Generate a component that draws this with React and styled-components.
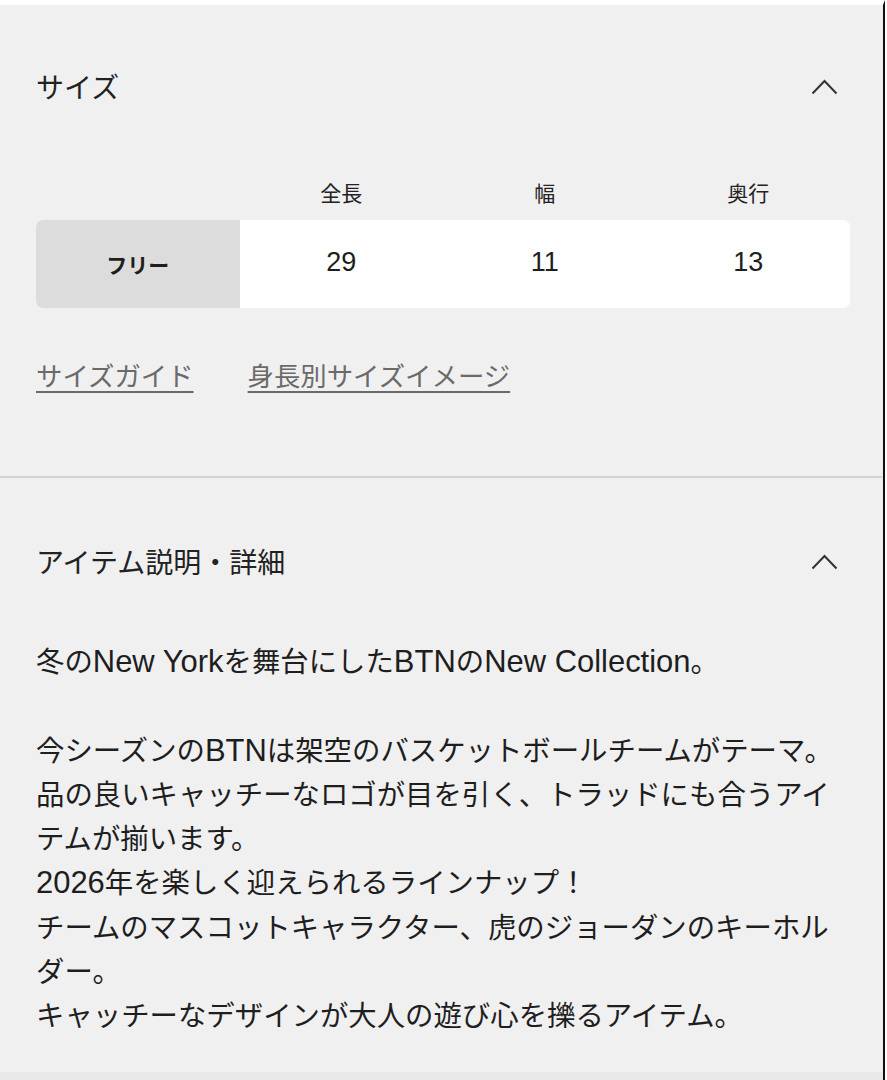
import React from "react"
import styled, { createGlobalStyle } from "styled-components"

const GlobalStyle = createGlobalStyle`
  html, body {
    margin: 0;
    padding: 0;
    background: #fff;
  }
  body {
    font-family: "Liberation Sans", "Noto Sans CJK JP", sans-serif;
    color: #222;
  }
`

const Page = styled.div`
  width: 885px;
  min-height: 1080px;
  box-sizing: border-box;
  border-top: 5px solid #fff;
  border-right: 2px solid #111;
  background: #e9e9e9;
`

const Panel = styled.div`
  width: 882px;
  min-height: 1067px;
  background: #f0f0f0;
  display: flex;
  flex-direction: column;
`

const Section = styled.section`
  padding: ${(p) => p.$top}px 32px ${(p) => p.$bottom}px 36px;
  border-bottom: ${(p) => (p.$divider ? "2px solid #d2d2d2" : "none")};
  display: flex;
  flex-direction: column;
`

const HeaderRow = styled.div`
  display: flex;
  align-items: center;
  justify-content: space-between;
  height: 40px;
`

const Title = styled.h2`
  margin: 0;
  font-size: 28px;
  font-weight: 400;
  color: #222;
`

const ChevronButton = styled.button`
  border: 0;
  background: none;
  padding: 0;
  margin-right: 12px;
  display: flex;
  cursor: pointer;
`

const SizeTable = styled.div`
  margin-top: 71px;
  display: flex;
  flex-direction: column;
  gap: 13px;
`

const HeadRow = styled.div`
  display: grid;
  grid-template-columns: repeat(4, 1fr);
  height: 30px;
  align-items: center;
`

const HeadCell = styled.div`
  text-align: center;
  font-size: 21px;
  color: #222;
`

const DataRow = styled.div`
  display: grid;
  grid-template-columns: repeat(4, 1fr);
  height: 88px;
  background: #fff;
  border-radius: 7px;
  overflow: hidden;
`

const DataCell = styled.div`
  display: flex;
  align-items: center;
  justify-content: center;
  padding-bottom: ${(p) => (p.$label ? "0" : "4px")};
  font-size: ${(p) => (p.$label ? "21px" : "27px")};
  font-weight: ${(p) => (p.$label ? 700 : 400)};
  background: ${(p) => (p.$label ? "#dcdcdc" : "transparent")};
  color: #1e1e1e;
`

const Links = styled.div`
  margin-top: 48px;
  display: flex;
  gap: 54px;
  height: 36px;
  align-items: center;
`

const GuideLink = styled.a`
  font-size: 26.4px;
  color: #6a6a6a;
  text-decoration: underline;
  text-decoration-thickness: 2px;
  text-underline-offset: 5px;
  cursor: pointer;
`

const Body = styled.p`
  margin: 59px 0 0;
  font-size: 28.4px;
  line-height: 44.3px;
  white-space: pre-wrap;
  color: #1e1e1e;
`

// latin runs sit a bit larger next to the kana, like the system font does
const Latin = styled.span`
  font-size: 1.09em;
`

const Chevron = () => (
  <svg width="27" height="17" viewBox="0 0 27 17" fill="none">
    <polyline points="1.5,15.5 13.5,3 25.5,15.5" stroke="#333" strokeWidth="2" />
  </svg>
)

const description = `冬のNew Yorkを舞台にしたBTNのNew Collection。

今シーズンのBTNは架空のバスケットボールチームがテーマ。
品の良いキャッチーなロゴが目を引く、トラッドにも合うアイテムが揃います。
2026年を楽しく迎えられるラインナップ！
チームのマスコットキャラクター、虎のジョーダンのキーホルダー。
キャッチーなデザインが大人の遊び心を擽るアイテム。`

const mixed = (text) =>
  text.split(/([A-Za-z0-9][A-Za-z0-9 ]*[A-Za-z0-9]|[A-Za-z0-9])/).map((part, i) =>
    i % 2 ? <Latin key={i}>{part}</Latin> : part
  )

const sizes = [{ name: "フリー", values: [29, 11, 13] }]

export default function App() {
  return (
    <>
      <GlobalStyle />
      <Page>
        <Panel>
          <Section $top={61} $bottom={84} $divider>
            <HeaderRow>
              <Title>サイズ</Title>
              <ChevronButton aria-label="閉じる">
                <Chevron />
              </ChevronButton>
            </HeaderRow>
            <SizeTable>
              <HeadRow>
                <HeadCell />
                <HeadCell>全長</HeadCell>
                <HeadCell>幅</HeadCell>
                <HeadCell>奥行</HeadCell>
              </HeadRow>
              {sizes.map((s) => (
                <DataRow key={s.name}>
                  <DataCell $label>{s.name}</DataCell>
                  {s.values.map((v, i) => (
                    <DataCell key={i}>{v}</DataCell>
                  ))}
                </DataRow>
              ))}
            </SizeTable>
            <Links>
              <GuideLink>サイズガイド</GuideLink>
              <GuideLink>身長別サイズイメージ</GuideLink>
            </Links>
          </Section>
          <Section $top={63} $bottom={30}>
            <HeaderRow>
              <Title>アイテム説明・詳細</Title>
              <ChevronButton aria-label="閉じる">
                <Chevron />
              </ChevronButton>
            </HeaderRow>
            <Body>{mixed(description)}</Body>
          </Section>
        </Panel>
      </Page>
    </>
  )
}
